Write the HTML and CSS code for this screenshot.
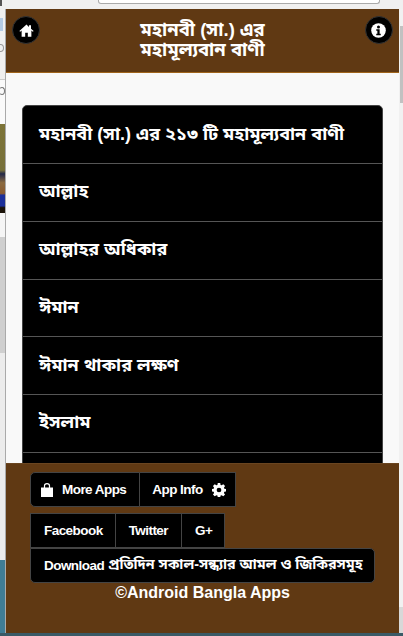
FILE: index.html
```html
<!DOCTYPE html>
<html lang="bn">
<head>
<meta charset="utf-8">
<title>মহানবী (সা.) এর মহামূল্যবান বাণী</title>
<link rel="stylesheet" href="styles.css">
</head>
<body>
<div class="desktop">
  <div class="chrome-top"><div class="tab-mark"></div><div class="address"></div></div>
  <div class="window-row">
    <div class="behind">
      <div class="b-light"><div class="b-blue"></div><div class="b-ring"></div></div>
      <div class="b-line"><div class="b-arc"></div></div>
      <div class="b-photo"></div>
      <div class="b-white"></div>
      <div class="b-grey"></div>
      <div class="b-white2"></div>
      <div class="b-sea"></div>
    </div>
    <main class="app">
      <header class="top">
        <a class="round"><svg viewBox="0 0 16 16" width="15" height="15"><path fill="#fff" d="M8 1.600 .4 8.400l.9 1L2.800 8.100v6.500h3.800v-4.200h2.800v4.200h3.800V8.100l1.500 1.300.9-1L12.800 6.200V2.400h-2.200v1.900z"/></svg></a>
        <h1>মহানবী (সা.) এর<br>মহামূল্যবান বাণী</h1>
        <a class="round"><svg viewBox="0 0 16 16" width="15" height="15"><circle cx="8" cy="8" r="7.800" fill="#fff"/><circle cx="8" cy="4.300" r="1.600"/><path d="M5.600 6.700h3.600v4.800h1.200v1.600H5.600v-1.600h1.200V8.300H5.600z"/></svg></a>
      </header>
      <div class="content">
        <ul class="list">
          <li>মহানবী (সা.) এর ২১৩ টি মহামূল্যবান বাণী</li>
          <li>আল্লাহ</li>
          <li>আল্লাহর অধিকার</li>
          <li>ঈমান</li>
          <li>ঈমান থাকার লক্ষণ</li>
          <li>ইসলাম</li>
          <li></li>
        </ul>
      </div>
      <footer class="foot">
        <div class="group">
          <a class="btn first"><svg viewBox="0 0 12 14" width="12" height="14"><path fill="#fff" d="M0 4.500h12V14H0z"/><path fill="none" stroke="#fff" stroke-width="1.200" d="M3.500 6V2.800a2.500 2.200 0 0 1 5 0V6"/></svg><span class="gap-l">More Apps</span></a>
          <a class="btn info">App Info<svg class="gap-r" viewBox="0 0 16 16" width="14" height="14"><path fill="#fff" fill-rule="evenodd" d="M6.600 0h2.800l.4 2.200 1.200.5L12.900 1.400l2 2-1.300 1.900.5 1.200 2 .4v2.800l-2 .4-.5 1.200 1.300 1.900-2 2-1.900-1.300-1.200.5-.4 2H6.600l-.4-2-1.200-.5-1.900 1.300-2-2 1.300-1.900-.5-1.200-2-.4V6.900l2-.4.5-1.200-1.300-1.900 2-2L5 2.700l1.200-.5zM8 5.300a2.700 2.700 0 1 0 0 5.400 2.700 2.700 0 0 0 0-5.400z"/></svg></a>
        </div>
        <div class="group social">
          <a class="btn fb">Facebook</a>
          <a class="btn">Twitter</a>
          <a class="btn gp">G+</a>
        </div>
        <a class="btn wide">Download <span class="bn">প্রতিদিন সকাল-সন্ধ্যার আমল ও জিকিরসমূহ</span></a>
        <p class="copy">©Android Bangla Apps</p>
      </footer>
    </main>
    <div class="side"><div class="thumb"></div><div class="side-fill"></div><div class="side-end"></div></div>
  </div>
  <div class="chrome-bottom"></div>
</div>
</body>
</html>
```
FILE: styles.css
```css
* { box-sizing: border-box; }
html, body { margin: 0; height: 100%; overflow: hidden; }
body { font-family: "Liberation Sans", "Noto Sans Bengali", "Noto Sans", sans-serif; background: #f0f0f0; }
.desktop { width: 403px; height: 636px; display: flex; flex-direction: column; }
.chrome-top { height: 9px; flex: none; background: #f0f0f0; display: flex; align-items: flex-start; }
.tab-mark { width: 2px; height: 6px; margin-right: 96px; background: #555; }
.address { width: 282px; height: 4px; background: #fff; border: 1px solid #aaa; border-top: 0; border-radius: 0 0 3px 3px; }
.window-row { height: 624px; flex: none; display: flex; }
.behind { width: 6px; flex: none; display: flex; flex-direction: column; background: #f0f0f0; border-right: 1px solid #aaa; }
.b-light { height: 70px; background: #f0f0f0; padding-top: 9px; }
.b-blue { width: 3px; height: 13px; background: #b4cbe4; }
.b-ring { width: 7px; height: 8px; margin: 13px 0 0 -3px; border: 1px solid #999; border-radius: 50%; }
.b-line { height: 45px; border-top: 1px solid #ccc; background: #fafafa; padding-top: 7px; overflow: hidden; }
.b-arc { width: 6px; height: 8px; margin-left: -1px; border: 1px solid #777; border-left-color: transparent; border-radius: 50%; }
.b-photo { height: 89px; background: linear-gradient(#7d7438 0, #77703a 52%, #22284a 56%, #8a6a40 66%, #8a5a30 78%, #1c2f9a 80%, #1c2f9a 92%, #1a1208 94%); }
.b-white { height: 24px; background: #f5f5f5; }
.b-grey { height: 116px; background: #cfcfcf; }
.b-white2 { height: 207px; background: #ececec; }
.b-sea { flex: 1; background: #3f7d96; }
.app { width: 393px; flex: none; position: relative; display: flex; flex-direction: column; background: #f9f9f9; }
.top { height: 64px; flex: none; background: #603913; border-bottom: 1px solid #a0651c; display: flex; justify-content: space-between; padding: 7px 6px 0 6px; }
.round { width: 28px; height: 28px; border-radius: 50%; background: #000; border: 1px solid #333; display: flex; align-items: center; justify-content: center; }
.top h1 { margin: 0; font-size: 18.500px; line-height: 20px; color: #fff; text-align: center; font-weight: 700; padding-top: 4px; }
.content { flex: 1; padding: 32px 16px 0 16px; overflow: hidden; }
.list { list-style: none; margin: 0; padding: 0; background: #000; border: 1px solid #444; border-radius: 5px; color: #fff; font-weight: 700; font-size: 18px; }
.list li { height: 57.750px; padding: 0 16px; display: flex; align-items: center; border-top: 1px solid #555; white-space: nowrap; }
.list li:first-child { border-top: 0; height: 57px; }
.foot { position: absolute; left: 0; right: 0; bottom: 0; height: 170px; background: #603913; border-top: 1px solid #6a4520; padding: 8px 24px 0 24px; color: #fff; display: flex; flex-direction: column; align-items: flex-start; }
.group { display: flex; margin-bottom: 6px; }
.social { margin-bottom: 0; }
.btn { height: 35px; background: #000; border: 1px solid #444; border-left-width: 0; color: #fff; font-size: 13.500px; font-weight: 700; letter-spacing: -.55px; display: flex; align-items: center; padding: 0 13px; white-space: nowrap; }
.btn:first-child { border-left-width: 1px; }
.first { border-radius: 5px 0 0 5px; padding: 0 13px 0 10px; }
.fb { padding-right: 12px; }
.gp { padding-right: 12px; }
.info { padding: 0 9px 0 12px; }
.gap-l { margin-left: 9px; }
.gap-r { margin-left: 9px; }
.wide { border-width: 1px; border-radius: 0 5px 5px 5px; width: 345px; }
.bn { font-size: 14.300px; font-weight: 700; letter-spacing: 0; margin-left: 4px; }
.copy { align-self: stretch; margin: 1px 0 0; text-align: center; font-size: 16px; font-weight: 700; }
.side { width: 4px; flex: none; background: #f1f1f1; display: flex; flex-direction: column; padding-top: 17px; }
.thumb { height: 77px; margin-left: 1px; background: #c1c1c1; }
.side-fill { flex: 1; }
.side-end { height: 26px; background: #d8d8d8; }
.chrome-bottom { height: 3px; background: #3a5a66; }
```
